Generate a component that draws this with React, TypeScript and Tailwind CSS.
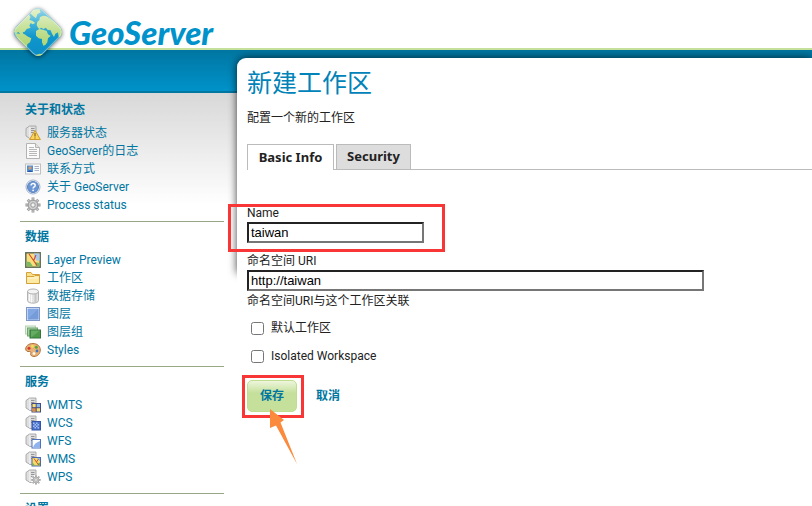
import React from 'react';

type IconName =
  | 'status' | 'logs' | 'contact' | 'about' | 'process'
  | 'preview' | 'workspace' | 'store' | 'layer' | 'group' | 'styles'
  | 'wmts' | 'wcs' | 'wfs' | 'wms' | 'wps';

type MenuItem = { label: string; icon: IconName };
type MenuSection = { title: string; items: MenuItem[] };

const MENU: MenuSection[] = [
  {
    title: '关于和状态',
    items: [
      { label: '服务器状态', icon: 'status' },
      { label: 'GeoServer的日志', icon: 'logs' },
      { label: '联系方式', icon: 'contact' },
      { label: '关于 GeoServer', icon: 'about' },
      { label: 'Process status', icon: 'process' },
    ],
  },
  {
    title: '数据',
    items: [
      { label: 'Layer Preview', icon: 'preview' },
      { label: '工作区', icon: 'workspace' },
      { label: '数据存储', icon: 'store' },
      { label: '图层', icon: 'layer' },
      { label: '图层组', icon: 'group' },
      { label: 'Styles', icon: 'styles' },
    ],
  },
  {
    title: '服务',
    items: [
      { label: 'WMTS', icon: 'wmts' },
      { label: 'WCS', icon: 'wcs' },
      { label: 'WFS', icon: 'wfs' },
      { label: 'WMS', icon: 'wms' },
      { label: 'WPS', icon: 'wps' },
    ],
  },
  { title: '设置', items: [] },
];

const Server = () => (
  <g>
    <path d="M1 3.5 4.5 1h6.500v12.500H5L1 11z" fill="#dedede" stroke="#a3a3a3" strokeWidth=".9" strokeLinejoin="round" />
    <path d="M4.800 1.800v11.200" stroke="#f8f8f8" strokeWidth=".8" />
    <path d="M6 3.500h3.500M6 5.500h3.500M6 7.500h3.500" stroke="#8c8c8c" strokeWidth=".9" />
  </g>
);

const Gear = () => (
  <g>
    <g stroke="#959595" strokeWidth="2.800">
      <path d="M8 .5v15M.5 8h15M2.700 2.700l10.600 10.600M13.300 2.700 2.700 13.300" />
    </g>
    <g stroke="#cacaca" strokeWidth="1.200">
      <path d="M8 1v14M1 8h14M3 3l10 10M13 3 3 13" />
    </g>
    <circle cx="8" cy="8" r="4.800" fill="#cfcfcf" stroke="#999" />
    <circle cx="8" cy="8" r="2.200" fill="#f4f4f4" stroke="#999" />
  </g>
);

const drawings: Record<IconName, React.ReactNode> = {
  status: (
    <>
      <Server />
      <path d="M10 5.5 15.4 14.5H4.6z" fill="#fbd65c" stroke="#cf9a2b" strokeLinejoin="round" />
      <path d="M10 8v3.5M10 12.4v1.2" stroke="#8a6018" strokeWidth="1.2" />
    </>
  ),
  logs: (
    <>
      <path d="M1.5.5h9l4 4v11h-13z" fill="#fbfbfb" stroke="#b3b3b3" />
      <path d="M10.5.5v4h4" fill="#e4e4e4" stroke="#b3b3b3" />
      <path d="M4 4.5h5M4 6.5h8M4 8.5h8M4 10.5h8M4 12.5h8" stroke="#b8b8b8" />
    </>
  ),
  contact: (
    <>
      <rect x=".5" y="3" width="15" height="10" fill="#fafafa" stroke="#c0c0c0" />
      <rect x="2" y="4.5" width="6" height="6.5" fill="#4b8ee0" />
      <circle cx="5" cy="7" r="1.7" fill="#d49a63" />
      <path d="M2.5 11c.5-2 4.500-2 5 0z" fill="#2456a5" />
      <path d="M9.500 5.500h4.500M9.500 7.500h4.500M9.500 9.500h4.500" stroke="#a7b3c8" />
    </>
  ),
  about: (
    <>
      <circle cx="8" cy="8" r="7" fill="#fff" stroke="#9fb1cd" />
      <circle cx="8" cy="8" r="5.600" fill="#6b96d3" stroke="#4a75b8" strokeWidth=".8" />
      <path d="M6 6.600c0-2.800 4.200-2.600 4.200-.2 0 1.500-2.100 1.500-2.100 3" fill="none" stroke="#fff" strokeWidth="1.500" />
      <circle cx="8.100" cy="11.300" r=".9" fill="#fff" />
    </>
  ),
  process: <Gear />,
  preview: (
    <>
      <rect x=".8" y=".8" width="14.400" height="14.400" fill="#f7e07c" stroke="#626a58" strokeWidth="1.500" />
      <path d="M9 1.500h5.500v7L12 9 9 5z" fill="#a9caef" />
      <path d="M1.500 9.500 5 10l3 4.500H1.500zM10 10l4.500 1v3.500H11z" fill="#7eb962" />
      <path d="M4 2 7.500 7 12 13.500M8.500 9l2.500-6" fill="none" stroke="#d8432b" strokeWidth="1.100" />
    </>
  ),
  workspace: (
    <>
      <path d="M1.500 13V2.500H6L7.500 4.500h7V13z" fill="#fbe08a" stroke="#d5a13b" />
      <path d="M1.500 13.500V6.500H9l1-1h4.500v8z" fill="#fdeaa4" stroke="#d5a13b" />
      <path d="M3 8h10.500" stroke="#fff8d8" />
    </>
  ),
  store: (
    <>
      <path d="M2.500 3.500v9c0 3.500 11 3.500 11 0v-9z" fill="#e2e2e2" stroke="#b0b0b0" />
      <path d="M4.500 5.500v8M6.500 6v8.500" stroke="#fafafa" strokeWidth="1.200" />
      <path d="M10.500 6v8" stroke="#c6c6c6" strokeWidth="2" />
      <ellipse cx="8" cy="3.500" rx="5.500" ry="2.500" fill="#f4f4f4" stroke="#b0b0b0" />
    </>
  ),
  layer: (
    <>
      <rect x="1.500" y="1.500" width="13" height="13" fill="#fff" stroke="#7d98c8" />
      <rect x="2.500" y="2.500" width="11" height="11" fill="#83a7e2" />
      <path d="M2.500 13.500 13.500 2.500v11z" fill="#759bd9" />
    </>
  ),
  group: (
    <>
      <rect x=".5" y="2" width="10" height="8" fill="#e3f1e2" stroke="#b4d2b3" />
      <rect x="2.500" y="4" width="10" height="8" fill="#a5cfa2" stroke="#6ea66b" />
      <rect x="5" y="6" width="10.500" height="8" fill="#4d984b" stroke="#35753a" />
      <path d="M6 13.500 15 6.500H6z" fill="#76b973" opacity=".6" />
    </>
  ),
  styles: (
    <>
      <path d="M8 1.500C3.500 1.500.7 4 .7 7c0 2 1.800 2.800 3.500 2.500 1.700-.2 2 .8 1.500 2-.5 1.700 1 3 3.300 3 3.800 0 6.300-3 6.300-6.500 0-4-3.300-6.500-7.300-6.500z" fill="#e8b277" stroke="#b0713a" />
      <circle cx="4" cy="6.300" r="1.500" fill="#d8362b" />
      <circle cx="7.500" cy="4.300" r="1.400" fill="#f4de51" />
      <circle cx="11.300" cy="5.300" r="1.500" fill="#55a43c" />
      <circle cx="12" cy="9" r="1.400" fill="#3b77c5" />
      <circle cx="9" cy="11.500" r="1.300" fill="#fff" />
    </>
  ),
  wmts: (
    <>
      <Server />
      <rect x="7" y="6.500" width="8.500" height="8.500" fill="#f5e071" stroke="#434c86" />
      <path d="M11.500 7h3.500v3.500h-3.500z" fill="#8bbaf0" />
      <path d="M7.500 11h3.500v3.500H7.500z" fill="#e08a48" />
      <path d="M11.200 6.500V15M7 10.700h8.500" stroke="#434c86" />
    </>
  ),
  wcs: (
    <>
      <Server />
      <rect x="7" y="6.500" width="8.500" height="8.500" fill="#4a72ca" stroke="#3454a8" />
      <path d="M8 7.500h1.500V9H8zM11 7.500h1.500V9H11zM9.500 9H11v1.500H9.500zM12.500 9H14v1.500h-1.500zM8 10.500h1.500V12H8zM11 10.500h1.500V12H11zM9.500 12H11v1.500H9.500zM12.500 12H14v1.500h-1.500z" fill="#a5bff2" />
    </>
  ),
  wfs: (
    <>
      <Server />
      <rect x="7" y="6.500" width="8.500" height="8.500" fill="#fff" stroke="#5072bd" />
      <path d="M8 14.500c1-3.500 3-5 7-6.500v6.500z" fill="#8eb3ee" />
    </>
  ),
  wms: (
    <>
      <Server />
      <rect x="7" y="6.500" width="8.500" height="8.500" fill="#f5dc66" stroke="#4f66ae" />
      <path d="M12 7h3v3.500z" fill="#8bbaf0" />
      <path d="M7.500 11.500l2.500 3H7.500zM13 12.500l2-1v3h-2z" fill="#6db155" />
      <path d="m9 7.500 4.500 6.500M11.500 11l2-3" stroke="#d8432b" strokeWidth=".9" />
    </>
  ),
  wps: (
    <>
      <Server />
      <circle cx="11" cy="11" r="5" fill="#fff" />
      <g transform="translate(6 6) scale(.62)">
        <Gear />
      </g>
    </>
  ),
};

const Icon = ({ name }: { name: IconName }) => (
  <svg viewBox="0 0 16 16" fill="none" className="size-4 shrink-0" aria-hidden="true">
    {drawings[name]}
  </svg>
);

const Logo = () => (
  <svg viewBox="0 0 52 52" className="size-[52px] shrink-0 drop-shadow-[0_1px_2px_rgba(0,0,0,0.55)]" aria-hidden="true">
    <defs>
      <linearGradient id="sea" x1="0" y1="0" x2="0" y2="1">
        <stop offset="0" stopColor="#a8dcec" />
        <stop offset=".35" stopColor="#3fb2d8" />
        <stop offset=".6" stopColor="#0f96cc" />
        <stop offset="1" stopColor="#0a8cc4" />
      </linearGradient>
      <linearGradient id="land" gradientUnits="userSpaceOnUse" x1="0" y1="20" x2="0" y2="160">
        <stop offset="0" stopColor="#e0efc4" />
        <stop offset=".5" stopColor="#bcdc88" />
        <stop offset="1" stopColor="#a0cc5c" />
      </linearGradient>
      <clipPath id="tile">
        <rect x="7" y="7" width="38" height="38" rx="7" transform="rotate(45 26 26)" />
      </clipPath>
    </defs>
    <g clipPath="url(#tile)">
      <path d="M0 0h52v52H0z" fill="url(#sea)" />
      <g transform="translate(-2 -1) scale(.3333)" fill="url(#land)">
        <path d="m8 78 48-50 6 8-4 8 10 4 8 6-8 4-6-4-4 8 4 6-12 4-6 8-6 2 4 8-10-2-8-8-4 6z" />
        <path d="m68 14 20-2 4 10-10 6-4 12-8-6-8-8z" />
        <path d="m14 84 14 2 16 2 8 6 12 6-4 12-8 6-2 14-8 4-8-16z" />
        <path d="m80 60 2-10 6-4 2-10 10-4 10 2 26 18 30 30-12 18-8-4-2-14-8 4-4 10-6-10-4-10-10-2-4-6-8 4-6-4-6 4-4-4z" />
        <path d="m78 78 10-6 12 2 10 4 4 10 8 4-8 8-2 12-6 8-6 2-4-10v-10l-10-2-8-8z" />
        <path d="m74 152 14-6 14 2 16-4-20 24z" />
      </g>
    </g>
    <rect x="7.500" y="7.500" width="37" height="37" rx="7" transform="rotate(45 26 26)" fill="none" stroke="#eef6ea" strokeOpacity=".45" />
  </svg>
);

const Sidebar = () => (
  <nav className="w-[237px] shrink-0 pl-5 pr-[13px] pt-[51px]">
    {MENU.map((section) => (
      <section key={section.title} className="mb-[6px] border-b border-[#99a884] pb-[7px] pl-[5px]">
        <h2 className="mb-[5px] text-[12px] leading-[18px] font-bold text-[#0076a1]">{section.title}</h2>
        <ul>
          {section.items.map((item) => (
            <li key={item.label}>
              <a href="#" className="flex h-[18px] items-center gap-[6px] text-[12px] leading-[18px] text-[#0076a1]">
                <Icon name={item.icon} />
                {item.label}
              </a>
            </li>
          ))}
        </ul>
      </section>
    ))}
  </nav>
);

const fieldClass =
  'block h-[21px] max-w-full border-2 border-t-[#222] border-l-[#222] border-r-[#767676] border-b-[#767676] bg-white px-[2px] font-["Liberation_Sans",Arial,sans-serif] text-[13px] text-black outline-none';

const WorkspaceForm = () => (
  <form className="pt-[34px] leading-[18px]" onSubmit={(e) => e.preventDefault()}>
    <div className="relative">
      <label htmlFor="name" className="block">Name</label>
      <input id="name" defaultValue="taiwan" className={`${fieldClass} w-[177px]`} />
      <div className="pointer-events-none absolute top-0 -left-[19px] h-12 w-[217px] border-3 border-[#f93636]" />
    </div>

    <div className="pt-[9px]">
      <label htmlFor="uri" className="block">命名空间 URI</label>
      <input id="uri" defaultValue="http://taiwan" className={`${fieldClass} w-[457px]`} />
      <p className="pt-px">命名空间URI与这个工作区关联</p>
    </div>

    <div className="flex flex-col gap-[10px] pt-[9px] pl-1">
      <label className="flex items-center gap-[7px]">
        <input type="checkbox" className="size-[13px]" />
        默认工作区
      </label>
      <label className="flex items-center gap-[7px]">
        <input type="checkbox" className="size-[13px]" />
        Isolated Workspace
      </label>
    </div>

    <div className="flex items-center gap-[19px] pt-[15px] font-bold text-[#0076a1]">
      <div className="relative">
        <button
          type="submit"
          className="h-8 w-[50px] rounded-[5px] border border-[#c0dc90] bg-linear-to-b from-[#eef6dd] to-[#c5e09a] to-40% text-center"
        >
          保存
        </button>
        <div className="pointer-events-none absolute -top-[5px] -left-[5px] h-[43px] w-[62px] border-3 border-[#f93636]" />
        <svg viewBox="0 0 28 56" className="pointer-events-none absolute top-[29px] left-[23px] h-14 w-7" aria-hidden="true">
          <path d="M0 0 14 11 10.500 13.500 27 55 6 16.500 0 19z" fill="#fb8a3c" />
        </svg>
      </div>
      <a href="#">取消</a>
    </div>
  </form>
);

const App: React.FC = () => {
  return (
    <div className='flex min-h-screen flex-col bg-white font-[Roboto,"Noto_Sans_CJK_SC",sans-serif] text-[12px] text-[#222]'>
      <header className="relative z-10 h-[50px] shrink-0 border-b-2 border-[#c5e09a]">
        <a href="#" className="absolute top-[6px] left-3 flex items-center gap-[5px]">
          <Logo />
          <span className="font-[Lato,sans-serif] text-[33px] leading-[52px] font-black text-[#0092ca] italic">
            GeoServer
          </span>
        </a>
      </header>

      <div className="flex grow bg-[linear-gradient(#0076a1_0,#0092ca_41px,#0076a1_41px,#0076a1_43px,#d8d8d8_43px,#ffffff_155px)]">
        <Sidebar />
        <main className="relative mt-2 min-w-0 grow">
          {/* soft edge that fades out beside the form */}
          <div className="absolute inset-x-0 top-0 h-[215px] rounded-tl-[9px] shadow-[0_0_9px_rgba(0,0,0,0.75)]" />
          <div className="relative h-full rounded-tl-[9px] bg-white pl-[10px]">
            <h1 className="pt-[9px] text-[25px] leading-[34px] text-[#0083b8]">新建工作区</h1>
            <p className="pt-2 leading-[18px]">配置一个新的工作区</p>
            <div
              role="tablist"
              className='mt-[17px] flex h-[26px] gap-[2px] border-b border-[#bbb] font-["Noto_Sans",sans-serif] text-[13px] font-bold'
            >
              <button role="tab" aria-selected="true" className="-mb-px w-[87px] border border-b-0 border-[#bbb] bg-white">
                Basic Info
              </button>
              <button role="tab" aria-selected="false" className="w-[75px] border border-b-0 border-[#bbb] bg-[#ddd]">
                Security
              </button>
            </div>
            <WorkspaceForm />
          </div>
        </main>
      </div>
    </div>
  );
};

export default App;
